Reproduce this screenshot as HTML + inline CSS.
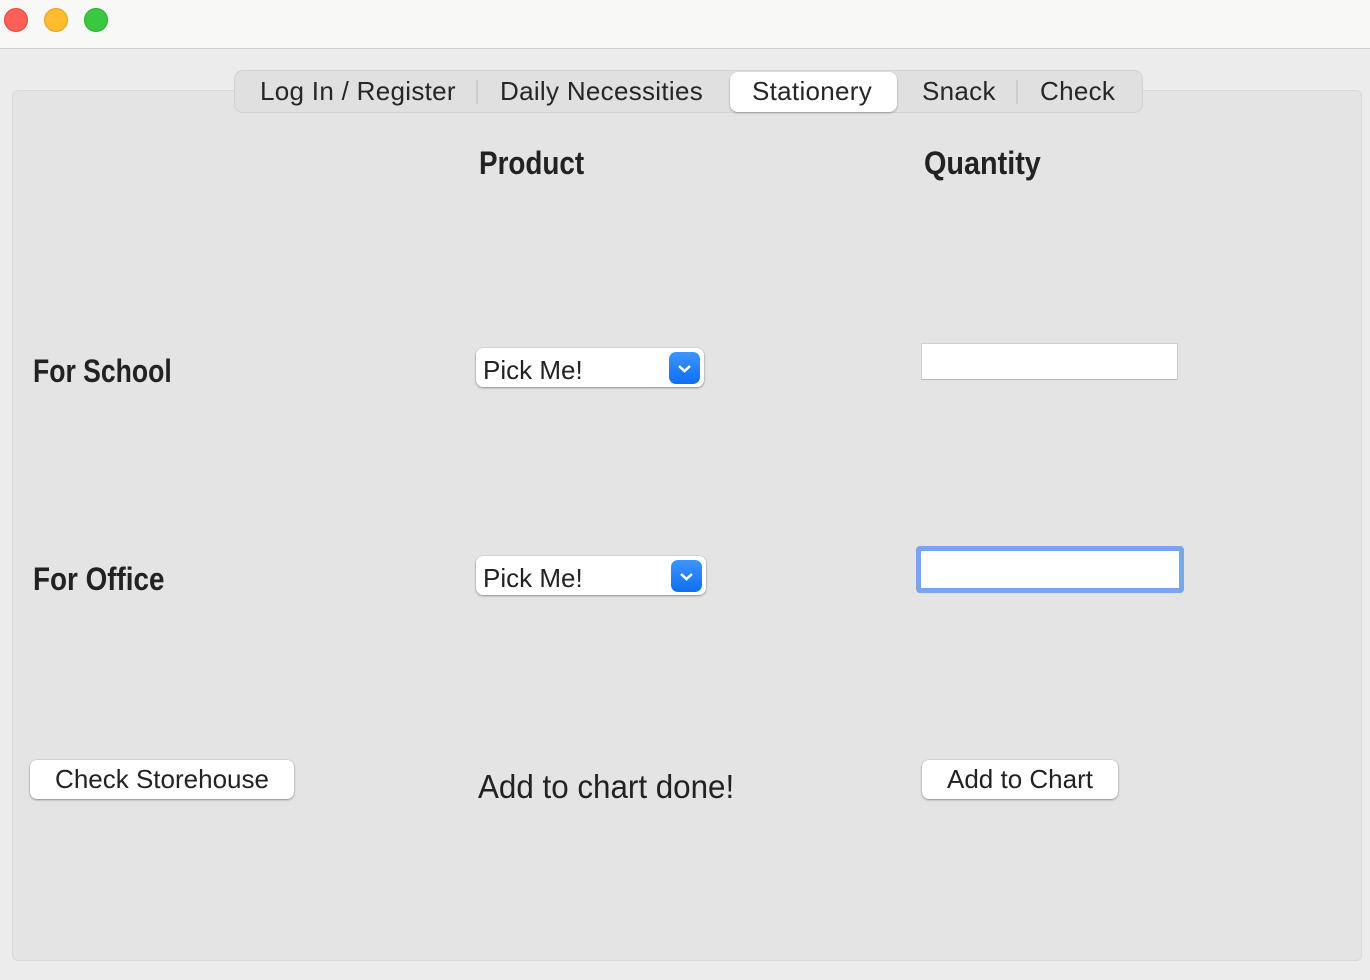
<!DOCTYPE html>
<html><head><style>
body{margin:0;width:1370px;height:980px;background:#ececec;position:relative;overflow:hidden;font-family:"Liberation Sans",sans-serif;color:#222}
.a{position:absolute}
.title{left:0;top:0;width:1370px;height:48px;background:#f8f8f7;border-bottom:1px solid #cfcfcf}
.dot{width:24px;height:24px;border-radius:50%;top:8px}
.panel{left:12px;top:90px;width:1350px;height:871px;background:#e4e4e4;border:1px solid #d8d8d8;border-radius:6px;box-sizing:border-box}
.tabs{left:234px;top:70px;width:909px;height:43px;background:#e0e0e0;border:1px solid #d2d2d2;border-radius:9px;box-sizing:border-box}
.t{font-size:26px;top:76px;color:#262626;letter-spacing:0.3px}
.sep{width:2px;height:24px;top:80px;background:#cdcdcd}
.sel{left:730px;top:72px;width:167px;height:40px;background:#fff;border-radius:8px;box-shadow:0 1px 2px rgba(0,0,0,.3)}
.h{font-weight:bold;font-size:32px;color:#222;transform-origin:0 0}
.pop{width:228px;height:39px;background:#fff;border-radius:7px;box-shadow:0 1px 2px rgba(0,0,0,.35),0 0 0 .5px rgba(0,0,0,.1)}
.pop span{position:absolute;left:7px;top:7px;font-size:26px}
.pop i{position:absolute;right:4px;top:4px;width:31px;height:32px;border-radius:7px;background:linear-gradient(#3d95ff,#0f6ef5)}
.btn{height:39px;background:#fff;border-radius:7px;box-shadow:0 1px 2px rgba(0,0,0,.35),0 0 0 .5px rgba(0,0,0,.1);font-size:26px;text-align:center;line-height:38px}
</style></head><body>
<div class="a title"></div>
<div class="a dot" style="left:4px;background:#fe5f57;border:1px solid #e0443e;box-sizing:border-box"></div>
<div class="a dot" style="left:44px;background:#febc2e;border:1px solid #dea123;box-sizing:border-box"></div>
<div class="a dot" style="left:84px;background:#3ac840;border:1px solid #2aac2e;box-sizing:border-box"></div>
<div class="a panel"></div>
<div class="a tabs"></div>
<div class="a sel"></div>
<div class="a t" style="left:260px">Log In / Register</div>
<div class="a sep" style="left:476px"></div>
<div class="a t" style="left:500px">Daily Necessities</div>
<div class="a t" style="left:752px">Stationery</div>
<div class="a t" style="left:922px">Snack</div>
<div class="a sep" style="left:1016px"></div>
<div class="a t" style="left:1040px">Check</div>
<div class="a h" style="left:479px;top:145px;transform:scaleX(.87)">Product</div>
<div class="a h" style="left:924px;top:145px;transform:scaleX(.9)">Quantity</div>
<div class="a h" style="left:33px;top:353px;transform:scaleX(.83)">For School</div>
<div class="a h" style="left:33px;top:561px;transform:scaleX(.87)">For Office</div>
<div class="a pop" style="left:476px;top:348px"><span>Pick Me!</span><i><svg width="31" height="32"><path d="M10 14l5.5 5 5.5-5" stroke="#fff" stroke-width="2.5" fill="none"/></svg></i></div>
<div class="a pop" style="left:476px;top:556px;width:230px"><span>Pick Me!</span><i><svg width="31" height="32"><path d="M10 14l5.5 5 5.5-5" stroke="#fff" stroke-width="2.5" fill="none"/></svg></i></div>
<div class="a" style="left:921px;top:343px;width:257px;height:37px;background:#fff;border:1px solid #cfcfcf;border-bottom-color:#b5b5b5;box-sizing:border-box"></div>
<div class="a" style="left:916px;top:546px;width:268px;height:47px;background:#fff;border:5px solid #77a5ee;border-radius:4px;box-sizing:border-box"></div>
<div class="a btn" style="left:30px;top:760px;width:264px">Check Storehouse</div>
<div class="a btn" style="left:922px;top:760px;width:196px">Add to Chart</div>
<div class="a" style="left:478px;top:768px;font-size:33px;color:#222;transform:scaleX(.95);transform-origin:0 0">Add to chart done!</div>
</body></html>
